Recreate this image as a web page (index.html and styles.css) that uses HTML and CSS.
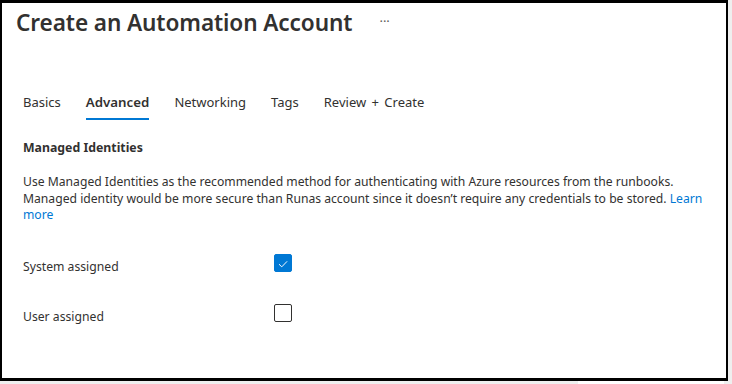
FILE: index.html
```html
<!DOCTYPE html>
<html lang="en">
<head>
<meta charset="utf-8">
<title>Create an Automation Account</title>
<link rel="stylesheet" href="styles.css">
</head>
<body>
<div class="frame">
  <header class="header">
    <h1 class="title">Create an Automation Account</h1>
    <span class="more">···</span>
  </header>
  <nav class="tabs">
    <span class="tab">Basics</span>
    <span class="tab active">Advanced</span>
    <span class="tab">Networking</span>
    <span class="tab">Tags</span>
    <span class="tab wide">Review + Create</span>
  </nav>
  <section class="content">
    <h2 class="section-title">Managed Identities</h2>
    <p class="desc">Use Managed Identities as the recommended method for authenticating with Azure resources from the runbooks. Managed identity would be more secure than Runas account since it doesn’t require any credentials to be stored. <a class="link" href="#">Learn more</a></p>
    <div class="row">
      <span class="label">System assigned</span>
      <span class="checkbox checked">
        <svg viewBox="0 0 18 18" width="18" height="18"><path d="M4.5 9.2 L7.6 12.2 L13.6 6" fill="none" stroke="#fff" stroke-width="1.1"/></svg>
      </span>
    </div>
    <div class="row">
      <span class="label">User assigned</span>
      <span class="checkbox"></span>
    </div>
  </section>
</div>
<div class="artifact"></div>
</body>
</html>
```
FILE: styles.css
```css
html, body {
  margin: 0;
  padding: 0;
}
body {
  background: #efefef;
  width: 732px;
  height: 384px;
  overflow: hidden;
  position: relative;
  font-family: "Noto Sans", "Open Sans", sans-serif;
  color: #323130;
}
.frame {
  box-sizing: border-box;
  width: 728px;
  height: 381px;
  background: #fff;
  border: 2px solid #000;
  border-top-width: 3px;
  border-bottom-width: 3px;
  padding: 0 0 0 14px;
}
.header {
  display: flex;
  align-items: center;
  height: 40px;
}
.title {
  margin: 0;
  font-size: 22.6px;
  font-weight: 600;
  line-height: 32px;
  color: #323130;
  letter-spacing: -0.1px;
}
.more {
  margin-left: 27px;
  font-size: 13px;
  color: #605e5c;
  position: relative;
  top: -2px;
}
.tabs {
  display: flex;
  gap: 25px;
  margin-top: 48px;
  padding-left: 7px;
}
.tab {
  font-size: 13px;
  line-height: 20px;
  padding: 1px 0 6px;
  border-bottom: 2px solid transparent;
  color: #323130;
}
.tab.wide {
  word-spacing: 2px;
}
.tab.active {
  border-bottom-color: #0078d4;
  font-weight: 600;
  font-size: 13.3px;
}
.content {
  padding-left: 7px;
  padding-right: 16px;
}
.section-title {
  margin: 19px 0 0;
  font-size: 12.3px;
  font-weight: 700;
  line-height: 18px;
}
.desc {
  margin: 17px 0 0;
  font-size: 12.17px;
  line-height: 16.5px;
}
.link {
  color: #0078d4;
  text-decoration: none;
}
.row {
  display: flex;
  align-items: flex-start;
}
.desc + .row {
  margin-top: 30px;
}
.row + .row {
  margin-top: 28px;
}
.label {
  width: 251px;
  margin-top: 4px;
  font-size: 12.2px;
  line-height: 18px;
}
.checkbox {
  box-sizing: border-box;
  width: 18px;
  height: 18px;
  border: 1px solid #323130;
  border-radius: 2px;
  display: flex;
}
.checkbox.checked {
  background: #0078d4;
  border-color: #0078d4;
}
.artifact {
  position: absolute;
  left: 578px;
  top: 381px;
  width: 146px;
  height: 3px;
  background: #fff;
}
```
